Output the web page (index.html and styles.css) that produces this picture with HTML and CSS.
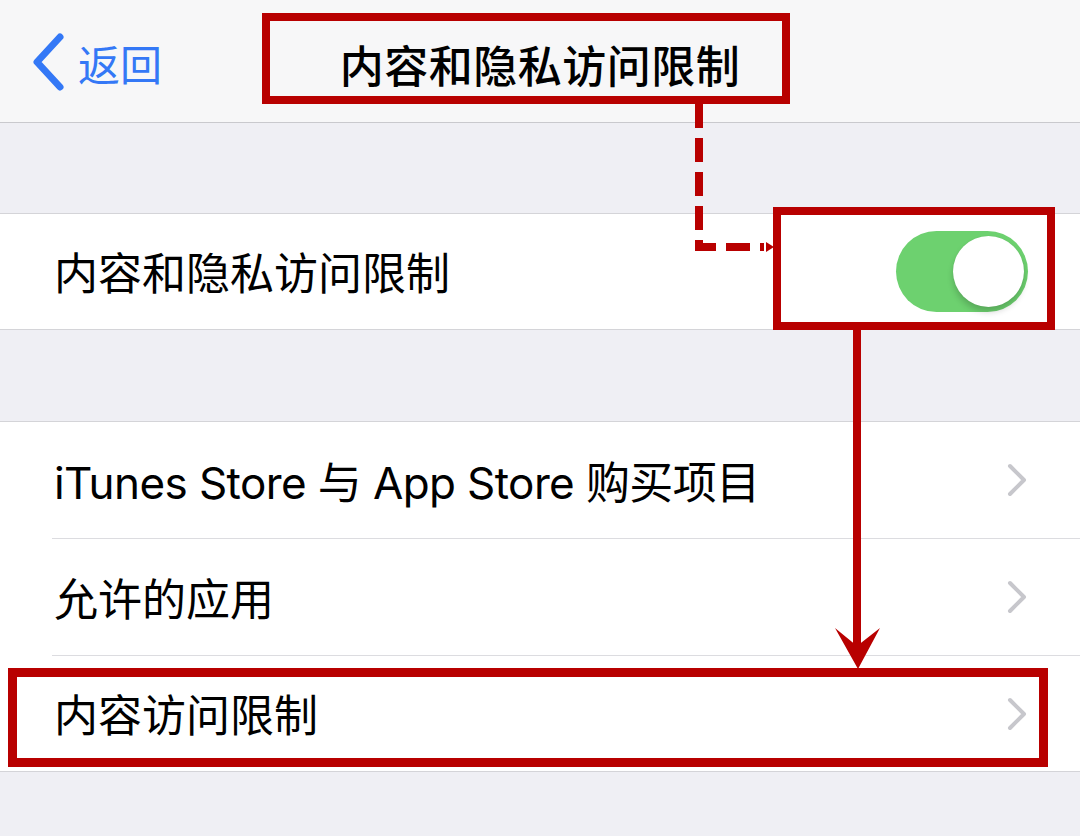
FILE: index.html
```html
<!DOCTYPE html>
<html lang="zh-CN">
<head>
<meta charset="utf-8">
<title>内容和隐私访问限制</title>
<link rel="stylesheet" href="styles.css">
</head>
<body>
<div class="screen">
  <header class="navbar">
    <div class="nav-left">
      <svg class="back-chevron" width="34" height="60" viewBox="0 0 34 60"><path d="M29 5 L6 30 L29 55" fill="none" stroke="#3478f6" stroke-width="7" stroke-linecap="round" stroke-linejoin="round"/></svg>
      <span class="back-text">返回</span>
    </div>
    <h1 class="nav-title">内容和隐私访问限制</h1>
    <div class="nav-right"></div>
  </header>

  <div class="gap gap-top"></div>

  <section class="group">
    <div class="row row-single">
      <span class="row-label">内容和隐私访问限制</span>
      <span class="toggle"><span class="knob"></span></span>
    </div>
  </section>

  <div class="gap gap-mid"></div>

  <section class="group">
    <div class="row">
      <span class="row-label row-label-mixed">iTunes Store 与 App Store 购买项目</span>
      <svg class="chevron" width="20" height="34" viewBox="0 0 20 34"><path d="M3 3 L17 17 L3 31" fill="none" stroke="#c7c7cc" stroke-width="4" stroke-linecap="round" stroke-linejoin="round"/></svg>
    </div>
    <div class="row">
      <span class="row-label">允许的应用</span>
      <svg class="chevron" width="20" height="34" viewBox="0 0 20 34"><path d="M3 3 L17 17 L3 31" fill="none" stroke="#c7c7cc" stroke-width="4" stroke-linecap="round" stroke-linejoin="round"/></svg>
    </div>
    <div class="row">
      <span class="row-label">内容访问限制</span>
      <svg class="chevron" width="20" height="34" viewBox="0 0 20 34"><path d="M3 3 L17 17 L3 31" fill="none" stroke="#c7c7cc" stroke-width="4" stroke-linecap="round" stroke-linejoin="round"/></svg>
    </div>
  </section>

  <svg class="annotations" width="1080" height="836" viewBox="0 0 1080 836">
    <g fill="none" stroke="#b80000">
      <rect x="266" y="17" width="520" height="83" stroke-width="8"/>
      <rect x="777" y="211" width="274" height="115" stroke-width="8"/>
      <rect x="12.5" y="672.5" width="1031" height="90" stroke-width="9"/>
      <path d="M699 104 V247 H764" stroke-width="8" stroke-dasharray="24 10"/>
      <path d="M857 330 V650" stroke-width="8"/>
    </g>
    <polygon points="766,242 774,247 766,252" fill="#b80000"/>
    <polygon points="835,628 857,646 880,628 858,669" fill="#b80000"/>
  </svg>
</div>
</body>
</html>
```

FILE: styles.css
```css
* {
  box-sizing: border-box;
}

html, body {
  margin: 0;
  padding: 0;
}

body {
  width: 1080px;
  height: 836px;
  overflow: hidden;
  background: #efeff4;
  font-family: Inter, "Noto Sans CJK SC", sans-serif;
  color: #000;
}

.screen {
  position: relative;
  width: 1080px;
  height: 836px;
  background: #efeff4;
}

.navbar {
  height: 123px;
  background: #f7f7f8;
  border-bottom: 1px solid #c9c9cd;
  display: grid;
  grid-template-columns: 1fr auto 1fr;
  align-items: center;
}

.nav-left {
  display: flex;
  align-items: center;
  padding-left: 31px;
  gap: 13px;
}

.back-chevron {
  display: block;
  margin-top: 1px;
}

.back-text {
  font-family: "Noto Sans CJK SC", sans-serif;
  font-size: 42px;
  color: #3478f6;
  line-height: 1;
  margin-top: 4px;
}

.nav-title {
  margin: 0;
  font-family: "Noto Sans CJK SC", sans-serif;
  font-size: 44px;
  font-weight: 500;
  line-height: 1;
  letter-spacing: 0.5px;
  margin-top: 6px;
}

.gap-top {
  height: 90px;
}

.gap-mid {
  height: 91px;
}

.group {
  background: #fff;
  border-top: 1px solid #d4d4d8;
  border-bottom: 1px solid #d4d4d8;
}

.row {
  height: 117px;
  margin-left: 52px;
  padding-left: 2px;
  padding-right: 52px;
  display: flex;
  align-items: center;
  justify-content: space-between;
  border-bottom: 1px solid #dcdce0;
}

.row:last-child {
  border-bottom: none;
  height: 115px;
}

.row-single {
  height: 116px;
}

.row-label {
  font-size: 44px;
  line-height: 1;
  white-space: nowrap;
  margin-top: 5px;
}

.row-label-mixed {
  letter-spacing: -0.6px;
}

.chevron {
  display: block;
  margin-right: 1px;
}

.toggle {
  position: relative;
  display: block;
  width: 132px;
  height: 81px;
  border-radius: 41px;
  background: #6dd16f;
}

.knob {
  position: absolute;
  top: 5px;
  right: 4px;
  width: 71px;
  height: 71px;
  border-radius: 50%;
  background: #fff;
  box-shadow: 0 5px 6px rgba(0, 0, 0, 0.18), 0 0 1px rgba(0, 0, 0, 0.12);
}

.annotations {
  position: absolute;
  left: 0;
  top: 0;
  pointer-events: none;
}
```
